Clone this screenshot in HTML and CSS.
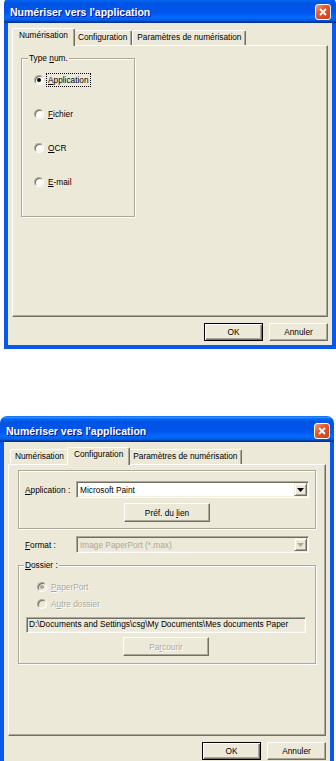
FILE: index.html
```html
<!DOCTYPE html>
<html lang="fr">
<head>
  <meta charset="UTF-8">
  <meta name="viewport" content="width=device-width, initial-scale=1.0">
  <title>Numériser vers l'application</title>
  <link rel="stylesheet" href="styles.css">
</head>
<body>
  <!-- onglet Numérisation -->
  <div class="win win1">
    <div class="titlebar">
      <span class="title">Numériser vers l'application</span>
      <span class="close"><svg width="8" height="8" viewBox="0 0 8 8"><path d="M1 1L7 7M7 1L1 7" stroke="#fff" stroke-width="1.8"/></svg></span>
    </div>
    <div class="frame">
      <div class="tabs">
        <div class="tab sel">Numérisation</div>
        <div class="tab">Configuration</div>
        <div class="tab">Paramètres de numérisation</div>
      </div>
      <div class="panel">
        <fieldset class="group type">
          <legend>Type <u>n</u>um.</legend>
          <div class="group-body">
            <div class="radio-row"><span class="radio on"></span><span class="rlabel focus"><u>A</u>pplication</span></div>
            <div class="radio-row"><span class="radio"></span><span class="rlabel"><u>F</u>ichier</span></div>
            <div class="radio-row"><span class="radio"></span><span class="rlabel"><u>O</u>CR</span></div>
            <div class="radio-row"><span class="radio"></span><span class="rlabel"><u>E</u>-mail</span></div>
          </div>
        </fieldset>
      </div>
      <div class="buttons">
        <div class="btn def"><span>OK</span></div>
        <div class="btn"><span>Annuler</span></div>
      </div>
    </div>
  </div>

  <!-- onglet Configuration -->
  <div class="win win2">
    <div class="titlebar">
      <span class="title">Numériser vers l'application</span>
      <span class="close"><svg width="8" height="8" viewBox="0 0 8 8"><path d="M1 1L7 7M7 1L1 7" stroke="#fff" stroke-width="1.8"/></svg></span>
    </div>
    <div class="frame">
      <div class="tabs">
        <div class="tab">Numérisation</div>
        <div class="tab sel">Configuration</div>
        <div class="tab">Paramètres de numérisation</div>
      </div>
      <div class="panel cfg">
        <div class="etched app-box">
          <div class="field-row">
            <span class="lbl"><u>A</u>pplication :</span>
            <div class="combo">
              <span class="combo-text">Microsoft Paint</span>
              <span class="drop"><svg width="7" height="4" viewBox="0 0 7 4"><polygon points="0,0 7,0 3.5,4" fill="#000"/></svg></span>
            </div>
          </div>
          <div class="btn wide"><span>Préf. du <u>l</u>ien</span></div>
        </div>

        <div class="field-row fmt">
          <span class="lbl"><u>F</u>ormat :</span>
          <div class="combo off">
            <span class="combo-text">Image PaperPort (*.max)</span>
            <span class="drop"><svg width="7" height="4" viewBox="0 0 7 4"><polygon points="0,0 7,0 3.5,4" fill="#aca899"/></svg></span>
          </div>
        </div>

        <fieldset class="group dossier">
          <legend><u>D</u>ossier :</legend>
          <div class="group-body">
            <div class="radio-row"><span class="radio on off"></span><span class="rlabel off"><u>P</u>aperPort</span></div>
            <div class="radio-row"><span class="radio off"></span><span class="rlabel off">A<u>u</u>tre dossier</span></div>
            <div class="path">D:\Documents and Settings\csg\My Documents\Mes documents Paper</div>
            <div class="btn wide off"><span>Pa<u>r</u>courir</span></div>
          </div>
        </fieldset>
      </div>
      <div class="buttons">
        <div class="btn def"><span>OK</span></div>
        <div class="btn"><span>Annuler</span></div>
      </div>
    </div>
  </div>
</body>
</html>
```

FILE: styles.css
```css
body {
  margin: 0;
  width: 336px;
  height: 761px;
  overflow: hidden;
  background: #fff;
  font-family: "Liberation Sans", Arial, sans-serif;
  font-size: 8.3px;
  color: #000;
}

/* fenêtres */
.win1 {
  width: 332px;
  margin: -3px 0 0 4px;
}
.win2 {
  width: 334px;
  margin: 67px 0 0 0;
}

.titlebar {
  height: 26px;
  box-sizing: border-box;
  display: flex;
  align-items: center;
  justify-content: space-between;
  padding: 3px 5px 0 6px;
  border-radius: 7px 7px 0 0;
  background: linear-gradient(to bottom, #0058ee 0%, #3593ff 4%, #288eff 6%, #127dff 8%, #036ffc 10%, #0262ee 14%, #0057e5 20%, #0054e3 24%, #0055eb 56%, #005bf5 66%, #026afe 76%, #0062ef 86%, #0052d6 92%, #0040ab 94%, #003092 100%);
}
.win2 .titlebar {
  padding-right: 4px;
}
.title {
  font-weight: bold;
  font-size: 10.5px;
  color: #fff;
  text-shadow: 1px 1px #0f1089;
}
.close {
  width: 16px;
  height: 16px;
  box-sizing: border-box;
  border: 1px solid #fff;
  border-radius: 3px;
  display: flex;
  align-items: center;
  justify-content: center;
  background: linear-gradient(135deg, #f2a184 0%, #e2572f 40%, #c8431a 100%);
}

.frame {
  background: #ece9d8;
  border: 4px solid #0858ee;
  border-top: 0;
  padding: 5px 4px 4px;
}

/* onglets */
.tabs {
  display: flex;
  align-items: flex-end;
  height: 17px;
  padding-left: 2px;
}
.tab {
  height: 15px;
  box-sizing: border-box;
  padding: 0 4px;
  line-height: 12px;
  white-space: nowrap;
  border: 1px solid #fff;
  border-bottom: 0;
  border-right-color: #716f64;
  border-radius: 2px 2px 0 0;
  box-shadow: inset -1px 0 #aca899;
}
.tab.sel {
  height: 18px;
  margin: 0 -2px -1px;
  padding: 0 6px;
  position: relative;
  z-index: 1;
  background: #ece9d8;
}

.panel {
  height: 272px;
  box-sizing: border-box;
  border: 1px solid;
  border-color: #fff #716f64 #716f64 #fff;
  box-shadow: inset -1px -1px #aca899;
  padding: 6px 8px 0;
}
.panel.cfg {
  padding: 5px 9px 0;
}

/* cadres gravés */
.group {
  margin: 0;
  padding: 0;
  min-width: 0;
  border: 1px solid #aca899;
  box-shadow: inset 1px 1px #fff, 1px 1px #fff;
}
.group legend {
  margin-left: 6px;
  padding: 0 1px;
  line-height: 12px;
  background: #ece9d8;
}
.type {
  width: 114px;
  box-sizing: border-box;
}
.type .group-body {
  padding: 9px 0 27px 12px;
  display: flex;
  flex-direction: column;
  gap: 20px;
}

.etched {
  border: 1px solid #aca899;
  box-shadow: inset 1px 1px #fff, 1px 1px #fff;
}
.app-box {
  padding: 10px 6px 6px;
}

/* boutons radio */
.radio-row {
  display: flex;
  align-items: center;
  gap: 2px;
  height: 14px;
}
.radio {
  width: 10px;
  height: 10px;
  box-sizing: border-box;
  border-radius: 50%;
  border: 1px solid;
  border-color: #aca899 #fff #fff #aca899;
  box-shadow: inset 1px 1px #716f64, inset -1px -1px #f1efe2;
  background: #fff;
  display: flex;
  align-items: center;
  justify-content: center;
}
.radio.on::after {
  content: "";
  width: 4px;
  height: 4px;
  border-radius: 50%;
  background: #000;
}
.radio.off {
  background: #ece9d8;
}
.radio.on.off::after {
  background: #aca899;
}
.rlabel {
  padding: 0 1px;
  line-height: 12px;
  border: 1px dotted transparent;
}
.rlabel.focus {
  border-color: #000;
}
.off {
  color: #aca899;
  text-shadow: 1px 1px #fff;
}

/* champs */
.field-row {
  display: flex;
  align-items: center;
}
.lbl {
  width: 51px;
  flex: none;
  white-space: nowrap;
}
.fmt {
  margin-top: 7px;
  padding: 0 7px;
}
.combo {
  flex: 1;
  height: 17px;
  box-sizing: border-box;
  display: flex;
  align-items: center;
  padding: 1px 1px 1px 2px;
  border: 1px solid;
  border-color: #aca899 #fff #fff #aca899;
  box-shadow: inset 1px 1px #716f64, inset -1px -1px #f1efe2;
  background: #fff;
}
.combo.off {
  background: #ece9d8;
  text-shadow: none;
}
.combo-text {
  flex: 1;
  padding-left: 1px;
  white-space: nowrap;
  overflow: hidden;
}
.drop {
  width: 13px;
  height: 13px;
  box-sizing: border-box;
  display: flex;
  align-items: center;
  justify-content: center;
  background: #ece9d8;
  border: 1px solid;
  border-color: #f1efe2 #716f64 #716f64 #f1efe2;
  box-shadow: inset 1px 1px #fff, inset -1px -1px #aca899;
}

.dossier {
  margin-top: 6px;
}
.dossier legend {
  margin-left: 5px;
}
.dossier .group-body {
  padding: 9px 9px 7px 7px;
}
.dossier .radio-row {
  padding-left: 11px;
}
.dossier .radio-row + .radio-row {
  margin-top: 3px;
}
.path {
  margin-top: 6px;
  height: 16px;
  box-sizing: border-box;
  padding: 0 2px;
  line-height: 13px;
  white-space: nowrap;
  overflow: hidden;
  border: 1px solid;
  border-color: #aca899 #fff #fff #aca899;
  box-shadow: inset 1px 1px #716f64, inset -1px -1px #f1efe2;
  text-shadow: none;
}

/* boutons */
.buttons {
  display: flex;
  justify-content: flex-end;
  gap: 6px;
  margin-top: 6px;
}
.btn {
  width: 59px;
  height: 18px;
  box-sizing: border-box;
  display: flex;
  align-items: center;
  justify-content: center;
  white-space: nowrap;
  border: 1px solid;
  border-color: #fff #716f64 #716f64 #fff;
  box-shadow: inset -1px -1px #aca899;
  background: #ece9d8;
}
.btn.def {
  border-color: #000;
  box-shadow: inset 1px 1px #fff, inset -1px -1px #716f64, inset -2px -2px #aca899;
}
.btn.wide {
  width: 86px;
  height: 19px;
  margin: 5px auto 0;
}
.dossier .btn.wide {
  margin-top: 4px;
}
```
